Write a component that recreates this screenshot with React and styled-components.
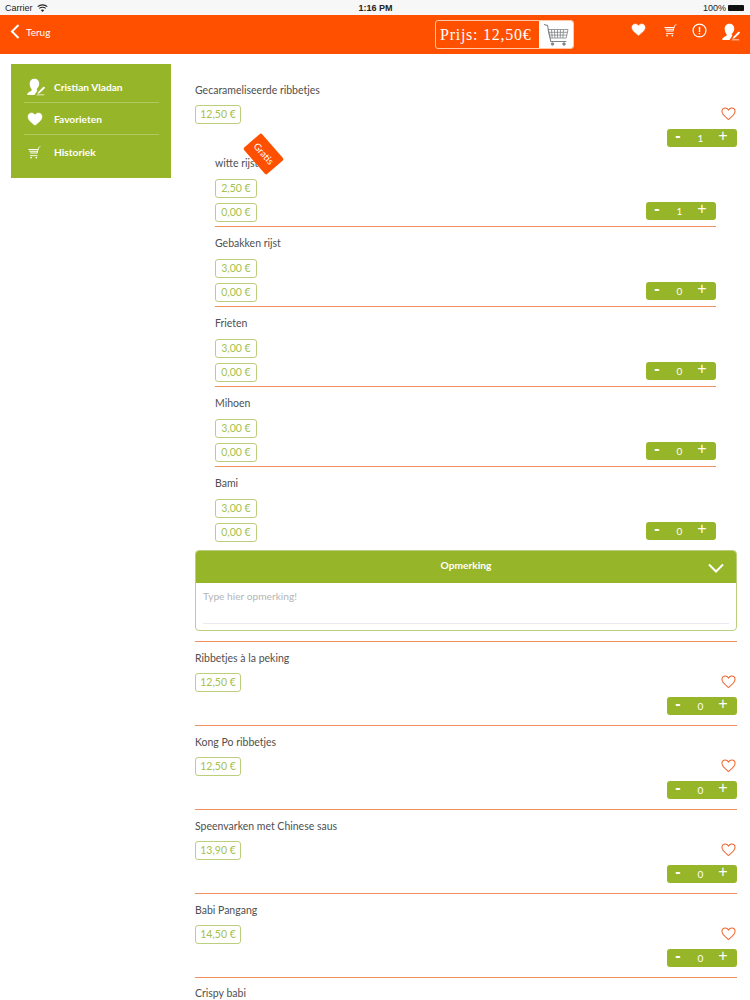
import React from 'react';
import styled, { createGlobalStyle } from 'styled-components';

const GREEN = '#97b529';
const ORANGE = '#ff5000';

const GlobalStyle = createGlobalStyle`
  html, body {
    margin: 0;
    background: #fff;
  }
  svg {
    display: block;
  }
`
const Page = styled.div`
  width: 750px;
  height: 1000px;
  overflow: hidden;
  font-family: 'Lato', sans-serif;
  color: #4f4f4f;
`
const StatusBar = styled.div`
  height: 15px;
  background: #f7f7f7;
  display: grid;
  grid-template-columns: 1fr auto 1fr;
  align-items: center;
  padding: 0 4px 0 5px;
  font-family: 'Liberation Sans', sans-serif;
  font-size: 9px;
  color: #222;
`
const StatusLeft = styled.div`
  display: flex;
  align-items: center;
  gap: 4px;
`
const StatusRight = styled.div`
  display: flex;
  align-items: center;
  justify-content: flex-end;
  gap: 2px;
`
const StatusTime = styled.div`
  font-weight: 700;
`
const Battery = styled.div`
  width: 16px;
  height: 6px;
  background: #111;
  border-radius: 1px;
  margin-right: 2px;
`
const Header = styled.header`
  height: 39px;
  background: ${ORANGE};
  position: relative;
  color: #fff;
  display: flex;
  align-items: flex-start;
`
const BackLink = styled.div`
  display: flex;
  align-items: center;
  gap: 6px;
  padding: 9px 0 0 10px;
  font-size: 10px;
`
const PriceBox = styled.div`
  position: absolute;
  left: 435px;
  top: 5px;
  width: 139px;
  height: 29px;
  box-sizing: border-box;
  border: 1px solid #ffc7a8;
  border-radius: 3px;
  display: flex;
  overflow: hidden;
`
const PriceText = styled.div`
  width: 103px;
  font-family: 'Liberation Serif', serif;
  font-size: 16px;
  letter-spacing: 0.75px;
  line-height: 27px;
  padding-left: 4px;
  box-sizing: border-box;
  white-space: nowrap;
`
const CartCell = styled.div`
  flex: 1;
  background: #fff;
  display: flex;
  align-items: center;
  justify-content: center;
`
const HeaderIcons = styled.div`
  position: absolute;
  left: 631px;
  top: 8px;
  display: flex;
  align-items: flex-start;
`
const HeaderIcon = styled.div`
  width: ${p => p.$w}px;
  display: flex;
  justify-content: flex-start;
`
const Body = styled.div`
  display: flex;
  align-items: flex-start;
  padding: 10px 13px 0 11px;
`
const Sidebar = styled.nav`
  width: 160px;
  height: 114px;
  flex-shrink: 0;
  background: ${GREEN};
  box-sizing: border-box;
  padding: 7px 12px 0 13px;
  color: #fff;
`
const SideRow = styled.div`
  height: 32px;
  display: flex;
  align-items: center;
  padding-top: 1px;
  border-bottom: ${p => (p.$last ? 'none' : '1px solid #b2ca5c')};
  font-size: 10.2px;
  font-weight: 700;
  box-sizing: border-box;
`
const SideIcon = styled.div`
  width: 30px;
  padding-left: 3px;
  box-sizing: border-box;
  display: flex;
`
const Main = styled.main`
  flex: 1;
  margin-left: 24px;
  padding-top: 20px;
  min-width: 0;
`
const Title = styled.div`
  font-size: 10.5px;
  line-height: 13px;
  height: 13px;
`
const PriceTag = styled.div`
  height: 19px;
  width: ${p => p.$w || 46}px;
  box-sizing: border-box;
  border: 1px solid #bccf7c;
  border-radius: 3px;
  color: #a6bf4e;
  font-size: 10.5px;
  line-height: 17px;
  text-align: center;
`
const Stepper = styled.div`
  width: 70px;
  height: 18px;
  background: ${GREEN};
  border-radius: 3px;
  color: #fff;
  display: grid;
  grid-template-columns: 22px 23px 22px;
  align-items: center;
  text-align: center;
  font-size: 10px;
  line-height: 16px;
  flex-shrink: 0;
`
const StepValue = styled.span`
  margin-bottom: 1px;
`
const StepButton = styled.span`
  font-size: 16px;
  line-height: 14px;
  height: 18px;
  font-family: 'Liberation Sans', sans-serif;
`
const MinusButton = styled(StepButton)`
  font-weight: 700;
`
const ProductRow = styled.section`
  height: ${p => p.$h}px;
  box-sizing: border-box;
  border-bottom: ${p => (p.$line ? '1px solid #f0905f' : 'none')};
`
const ProductInner = styled.div`
  display: flex;
  flex-direction: column;
  padding-top: ${p => p.$top || 0}px;
`
const PriceLine = styled.div`
  display: flex;
  justify-content: space-between;
  align-items: flex-start;
  margin-top: 8px;
  height: 19px;
`
const HeartWrap = styled.div`
  padding: 2px 1px 0 0;
`
const StepLine = styled.div`
  display: flex;
  justify-content: flex-end;
  margin-top: 5px;
`
const SubList = styled.div`
  margin: 0 21px 0 20px;
  padding-top: 10px;
`
const SubRow = styled.div`
  height: ${p => p.$h}px;
  box-sizing: border-box;
  position: relative;
  padding-top: ${p => p.$top}px;
  border-bottom: ${p => (p.$last ? 'none' : '1px solid #f0905f')};
`
const SubPrices = styled.div`
  display: flex;
  justify-content: space-between;
  align-items: flex-end;
  margin-top: 9px;
`
const TagStack = styled.div`
  display: flex;
  flex-direction: column;
  gap: 5px;
`
const SubStepper = styled.div`
  margin-bottom: 2px;
`
const GratisBadge = styled.div`
  position: absolute;
  left: 31px;
  top: -15px;
  width: 35px;
  height: 24px;
  background: ${ORANGE};
  color: #fff;
  border-radius: 2px;
  font-size: 9.5px;
  line-height: 24px;
  text-align: center;
  transform: rotate(49deg);
`
const Note = styled.div`
  height: 81px;
  box-sizing: border-box;
  border: 1px solid #bccf7c;
  border-radius: 4px;
  overflow: hidden;
  margin-top: 3px;
`
const NoteHeader = styled.div`
  height: 32px;
  background: ${GREEN};
  color: #fff;
  font-size: 10.2px;
  font-weight: 700;
  line-height: 29px;
  text-align: center;
  position: relative;
`
const NoteChevron = styled.svg`
  position: absolute;
  right: 12px;
  top: 12px;
`
const NoteBody = styled.div`
  margin: 0 7px;
  height: 33px;
  border-bottom: 1px solid #e9e9f4;
  color: #b5b5b5;
  font-size: 10.2px;
  line-height: 13px;
  padding-top: 7px;
`
const NoteRule = styled.div`
  height: 1px;
  background: #f0905f;
  margin-top: 10px;
`

const HeartIcon = ({ size = 16, color = '#fff', outline }) => (
  <svg width={size} height={size * 0.875} viewBox="0 0 32 28">
    <path
      d="M16 26.500C10 21.500 2 16.500 2 9.300 2 5 5.200 2 9 2c3 0 5.500 1.600 7 4.200C17.500 3.600 20 2 23 2c3.800 0 7 3 7 7.300 0 7.200-8 12.200-14 17.200z"
      fill={outline ? 'none' : color}
      stroke={color}
      strokeWidth={outline ? 2.2 : 1}
    />
  </svg>
);

const SmallCart = ({ size = 14 }) => (
  <svg width={size} height={size} viewBox="0 0 24 24" fill="#fff">
    <path d="M23 1.500l-1 .5-2.800 2.500-.7 2.500H2l1 1.500h15l-.4 1.500H3.500l.7 1.500h13l-.4 1.500H5l.6 1.500h11.200l1.200-.5 2.500-9.500L23 3z" />
    <path d="M5 17.500h13V19H5z" />
    <circle cx="7" cy="21.500" r="1.500" />
    <circle cx="16" cy="21.500" r="1.500" />
  </svg>
);

const UserIcon = ({ size = 20 }) => (
  <svg width={size} height={size} viewBox="0 0 24 24" fill="#fff">
    <path d="M10 1c3.800 0 6.300 2.800 6.300 6.300 0 3-1.300 5.200-2.800 6.700-.8.900-.6 1.900.4 2.500L10 22.500H1c-.6 0-1-.6-.7-1.200 1-2 3.200-3.300 5-4 1.200-.6 1.400-1.700.6-2.700C4.600 13 3.600 10.500 3.600 7.500 3.600 3.800 6.200 1 10 1z" />
    <path d="M15 18.500l6.500-6.500c.6-.5 2-.5 2.300.6.2.6 0 1.100-.4 1.500l-6.400 6-3 1.200z" />
    <path d="M12 23h11v-1H14z" />
  </svg>
);

const InfoIcon = () => (
  <svg width="15" height="15" viewBox="0 0 16 16" fill="none" stroke="#fff">
    <circle cx="8" cy="8" r="6.900" strokeWidth="1.300" />
    <path d="M8 4v5.500M8 10.700v1.300" strokeWidth="1.500" />
  </svg>
);

const BigCart = () => (
  <svg width="26" height="25" viewBox="0 0 26 25" fill="none" stroke="#7f8488" strokeWidth="0.8">
    <path d="M1 2.500l3.500 1 3.300 16h15.500" strokeWidth="1.100" />
    <path d="M5 7.500h20l-1.800 8.500H7z" />
    <path d="M8.500 7.500l.7 8.500M11.500 7.500l.4 8.500M14.500 7.500v8.500M17.500 7.500l-.3 8.500M20.500 7.500l-.7 8.500M5.800 10.300h18.600M6.300 13.100h17.500" />
    <circle cx="9.500" cy="22" r="1.300" fill="#7f8488" />
    <circle cx="21" cy="22" r="1.300" fill="#7f8488" />
  </svg>
);

const Wifi = () => (
  <svg width="11" height="8" viewBox="0 0 11 8" fill="none" stroke="#222" strokeWidth="1.100">
    <path d="M.7 2.700c2.700-2.400 7-2.400 9.600 0M2.300 4.400c1.700-1.500 4.700-1.500 6.400 0" />
    <path d="M5.500 8L3.800 6c1-.8 2.400-.8 3.400 0z" fill="#222" stroke="none" />
  </svg>
);

const Count = ({ value }) => (
  <Stepper>
    <MinusButton>-</MinusButton>
    <StepValue>{value}</StepValue>
    <StepButton>+</StepButton>
  </Stepper>
);

const sides = [
  { name: 'witte rijst', price: '2,50 €', count: 1, free: true },
  { name: 'Gebakken rijst', price: '3,00 €', count: 0 },
  { name: 'Frieten', price: '3,00 €', count: 0 },
  { name: 'Mihoen', price: '3,00 €', count: 0 },
  { name: 'Bami', price: '3,00 €', count: 0 },
];

const products = [
  { name: 'Ribbetjes à la peking', price: '12,50 €' },
  { name: 'Kong Po ribbetjes', price: '12,50 €' },
  { name: 'Speenvarken met Chinese saus', price: '13,90 €' },
  { name: 'Babi Pangang', price: '14,50 €' },
];

const Product = ({ name, price, count, top }) => (
  <ProductInner $top={top}>
    <Title>{name}</Title>
    <PriceLine>
      <PriceTag>{price}</PriceTag>
      <HeartWrap>
        <HeartIcon outline color="#f0632a" size={15} />
      </HeartWrap>
    </PriceLine>
    <StepLine>
      <Count value={count} />
    </StepLine>
  </ProductInner>
);

export default function App() {
  return (
    <Page>
      <GlobalStyle />
      <StatusBar>
        <StatusLeft>Carrier <Wifi /></StatusLeft>
        <StatusTime>1:16 PM</StatusTime>
        <StatusRight>100% <Battery /></StatusRight>
      </StatusBar>
      <Header>
        <BackLink>
          <svg width="10" height="15" viewBox="0 0 10 15" fill="none" stroke="#fff" strokeWidth="2">
            <path d="M8.500 1L2 7.500 8.500 14" />
          </svg>
          Terug
        </BackLink>
        <PriceBox>
          <PriceText>Prijs: 12,50€</PriceText>
          <CartCell><BigCart /></CartCell>
        </PriceBox>
        <HeaderIcons>
          <HeaderIcon $w={32}><HeartIcon size={15} /></HeaderIcon>
          <HeaderIcon $w={29}><SmallCart size={14} /></HeaderIcon>
          <HeaderIcon $w={30}><InfoIcon /></HeaderIcon>
          <HeaderIcon $w={20}><UserIcon size={18} /></HeaderIcon>
        </HeaderIcons>
      </Header>
      <Body>
        <Sidebar>
          <SideRow><SideIcon><UserIcon size={18} /></SideIcon>Cristian Vladan</SideRow>
          <SideRow><SideIcon><HeartIcon size={16} /></SideIcon>Favorieten</SideRow>
          <SideRow $last><SideIcon><SmallCart size={14} /></SideIcon>Historiek</SideRow>
        </Sidebar>
        <Main>
          <Product name="Gecarameliseerde ribbetjes" price="12,50 €" count={1} />
          <SubList>
            {sides.map((s, i) => (
              <SubRow
                key={s.name}
                $h={i === 0 ? 70 : 80}
                $top={i === 0 ? 0 : 10}
                $last={i === sides.length - 1}
              >
                {s.free && <GratisBadge>Gratis</GratisBadge>}
                <Title>{s.name}</Title>
                <SubPrices>
                  <TagStack>
                    <PriceTag $w={42}>{s.price}</PriceTag>
                    <PriceTag $w={42}>0,00 €</PriceTag>
                  </TagStack>
                  <SubStepper><Count value={s.count} /></SubStepper>
                </SubPrices>
              </SubRow>
            ))}
          </SubList>
          <Note>
            <NoteHeader>
              Opmerking
              <NoteChevron width="16" height="10" viewBox="0 0 16 10" fill="none" stroke="#fff" strokeWidth="2">
                <path d="M1 1.500l7 7 7-7" />
              </NoteChevron>
            </NoteHeader>
            <NoteBody>Type hier opmerking!</NoteBody>
          </Note>
          <NoteRule />
          {products.map(p => (
            <ProductRow key={p.name} $h={84} $line>
              <Product name={p.name} price={p.price} count={0} top={10} />
            </ProductRow>
          ))}
          <ProductRow $h={22}>
            <ProductInner $top={9}>
              <Title>Crispy babi</Title>
            </ProductInner>
          </ProductRow>
        </Main>
      </Body>
    </Page>
  );
}
